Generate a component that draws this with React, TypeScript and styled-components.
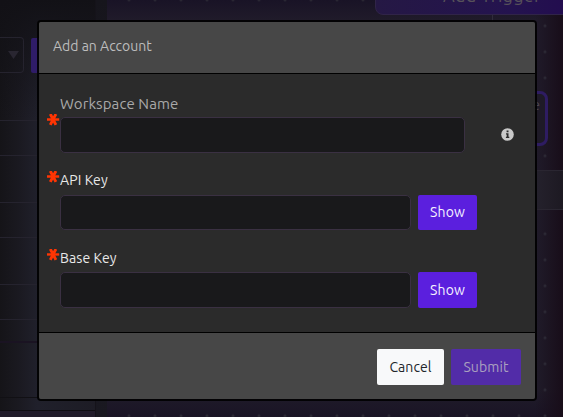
import React from 'react';
import styled, { createGlobalStyle } from 'styled-components';

const GlobalStyle = createGlobalStyle`
  *, *::before, *::after { box-sizing: border-box; }
  body {
    margin: 0;
    overflow: hidden;
    background: #18161e;
    font-family: Ubuntu, 'Noto Sans', sans-serif;
  }
`;

const Page = styled.div`
  position: relative;
  width: 563px;
  height: 417px;
  overflow: hidden;
`;

const Workspace = styled.div`
  display: flex;
  height: 100%;
`;

const SidePanel = styled.aside`
  width: 96px;
  height: 100%;
  overflow: hidden;
  border-right: 1px solid #15131a;
  background: linear-gradient(90deg, #151418 0, #1a1920 18px, #20202b 37px, #1d1c25 96px);
`;

const PanelRow = styled.div<{ $h: number; $line?: string; $thick?: number; $bg?: string }>`
  display: flex;
  align-items: flex-end;
  gap: 8px;
  height: ${(p) => p.$h}px;
  border-bottom: ${(p) => p.$thick ?? 1}px solid ${(p) => p.$line ?? '#25232e'};
  background: ${(p) => p.$bg ?? 'transparent'};
`;

const PickerRow = styled(PanelRow)`
  padding-bottom: 47px;
  background: linear-gradient(#121116, rgba(18, 17, 22, 0));
`;

const Picker = styled.div`
  display: flex;
  align-items: center;
  justify-content: flex-end;
  width: 24px;
  height: 36px;
  padding-right: 4px;
  border: 1px solid #25232e;
  border-left: 0;
  border-radius: 0 4px 4px 0;
`;

const PickerAction = styled.div`
  width: 50px;
  height: 35px;
  margin-left: -1px;
  border-radius: 2px;
  background: #2f1c68;
`;

const Gutter = styled.div`
  width: 11px;
  background: linear-gradient(#16151c, #1d1c26 50%, #191820);
`;

const Canvas = styled.div`
  position: relative;
  flex: 1;
  background: linear-gradient(90deg, rgba(24, 15, 26, 0) 428px, #180d19 456px),
    linear-gradient(#191326, #201b2a 20px, #201c2a 390px, #1a1425);
`;

const CanvasDrawing = styled.svg`
  position: absolute;
  inset: 0;
`;

const TriggerNode = styled.div`
  position: absolute;
  left: 268px;
  top: -40px;
  width: 230px;
  height: 55px;
  padding: 21px 0 0 67px;
  border: 1px solid #302448;
  border-radius: 8px;
  background: linear-gradient(90deg, #251844, #24134f 60%, #22084f);
  color: #57515a;
  font-size: 18px;
  line-height: 26px;
  white-space: nowrap;
  letter-spacing: 0.3px;
`;

const StepNode = styled.div`
  position: absolute;
  left: 340px;
  top: 91px;
  width: 101px;
  height: 55px;
  padding: 3px 5px;
  border: 3px solid #2e1c62;
  border-radius: 8px;
  background: #1e1a27;
  color: #4b4651;
  font-size: 14px;
  text-align: right;
`;

const CanvasBand = styled.div`
  position: absolute;
  left: 340px;
  right: 0;
  top: 170px;
  height: 40px;
  border: solid #2a2631;
  border-width: 1px 0;
  background: linear-gradient(90deg, #25222d 75%, #1d1922);
`;

const Dialog = styled.section`
  position: absolute;
  left: 37px;
  top: 20px;
  display: flex;
  flex-direction: column;
  width: 500px;
  height: 381px;
  border: 2px solid rgba(0, 0, 0, 0.9);
  border-radius: 4px;
  background: #2b2b2b;
  background-clip: padding-box;
  overflow: hidden;
`;

const DialogHeader = styled.header`
  display: flex;
  align-items: center;
  height: 52px;
  padding: 0 14px 4px;
  border-bottom: 1px solid #000;
  background: #474747;
  color: #bdbdbd;
`;

const Title = styled.h1`
  margin: 0;
  font-size: 14px;
  font-weight: 400;
`;

const DialogBody = styled.div`
  flex: 1;
  padding: 20px 20px 0 8px;
`;

const DialogFooter = styled.footer`
  display: flex;
  justify-content: flex-end;
  gap: 7px;
  height: 67px;
  padding: 16px 14px 14px;
  border-top: 1px solid #000;
  background: #474747;
`;

const Field = styled.div<{ $h: number; $starTop: number }>`
  display: grid;
  grid-template-columns: 13px 1fr;
  height: ${(p) => p.$h}px;

  > svg { margin-top: ${(p) => p.$starTop}px; }
`;

const Label = styled.label<{ $muted?: boolean; $size: number; $h: number }>`
  display: block;
  height: ${(p) => p.$h}px;
  color: ${(p) => (p.$muted ? '#a9a9a9' : '#e8e8e8')};
  font-size: ${(p) => p.$size}px;
  line-height: 20px;
  letter-spacing: 0.1px;
`;

const Controls = styled.div`
  display: flex;
  align-items: center;
`;

const Input = styled.input<{ $w: number; $h: number }>`
  width: ${(p) => p.$w}px;
  height: ${(p) => p.$h}px;
  padding: 0 10px;
  border: 1px solid #3a3042;
  border-radius: 5px;
  outline: 0;
  background: #19191b;
  color: #e8e8e8;
`;

const Button = styled.button<{ $kind: 'primary' | 'light' | 'disabled'; $w: number; $h: number }>`
  width: ${(p) => p.$w}px;
  height: ${(p) => p.$h}px;
  padding: 0 0 1px;
  border: 0;
  border-radius: 2px;
  font: 400 14px Ubuntu, 'Noto Sans', sans-serif;
  letter-spacing: 0.1px;
  color: ${(p) => ({ primary: '#f5f2ff', light: '#212529', disabled: '#aaa0bf' })[p.$kind]};
  background: ${(p) => ({ primary: '#5b1fde', light: '#f8f9fa', disabled: '#522ca8' })[p.$kind]};
`;

const ShowButton = styled(Button)`
  margin-left: 7px;
`;

const InfoIcon = styled.svg`
  margin: -2px 0 0 36px;
`;

const Star = () => (
  <svg width="13" height="12" viewBox="0 0 13 12" stroke="#ff3503" strokeWidth="2.9">
    <path d="M0 5.4H12.2" strokeWidth="2.5" />
    <path d="M3.3 0L8.9 10.8M8.9 0L3.3 10.8" />
  </svg>
);

const Info = () => (
  <InfoIcon width="13" height="13" viewBox="0 0 13 13">
    <circle cx="6.5" cy="6.5" r="6.3" fill="#c9c9c9" />
    <path d="M5.6 2.5h1.9v1.8H5.6zM5 5.3h2.5v3.5h.8v1.1H4.9V8.8h.8V6.4H5z" fill="#2b2b2b" />
  </InfoIcon>
);

const SecretField = ({ label, height, labelHeight, starTop, inputHeight }: {
  label: string; height: number; labelHeight: number; starTop: number; inputHeight: number;
}) => (
  <Field $h={height} $starTop={starTop}>
    <Star />
    <div>
      <Label $size={14} $h={labelHeight}>{label}</Label>
      <Controls>
        <Input $w={351} $h={inputHeight} aria-label={label} />
        <ShowButton $kind="primary" $w={59} $h={inputHeight}>Show</ShowButton>
      </Controls>
    </div>
  </Field>
);

export default function App() {
  return (
    <>
      <GlobalStyle />
      <Page>
        <Workspace>
          <SidePanel>
            <PickerRow $h={121}>
              <Picker>
                <svg width="11" height="8" viewBox="0 0 11 8"><path d="M0 0H11L5.5 8Z" fill="#292631" /></svg>
              </Picker>
              <PickerAction />
            </PickerRow>
            <PanelRow $h={35} />
            <PanelRow $h={47} />
            <PanelRow $h={35} />
            <PanelRow $h={47} />
            <PanelRow $h={35} />
            <PanelRow $h={23} $thick={2} $line="#1a1322" />
            <PanelRow $h={55} $line="#111014" />
            <PanelRow $h={13} $line="#100f13" />
            <PanelRow $h={10} $bg="#211c2a" $line="#211c2a" />
          </SidePanel>
          <Gutter />
          <Canvas>
            <CanvasDrawing width="456" height="417">
              <defs>
                <pattern id="dots" x="9" y="12.8" width="26" height="26" patternUnits="userSpaceOnUse">
                  <circle cx="13" cy="13" r="1.5" fill="#2b2834" />
                </pattern>
              </defs>
              <rect width="456" height="417" fill="url(#dots)" />
              <path d="M385.5 15V91" stroke="#302c3b" />
            </CanvasDrawing>
            <TriggerNode>Add Trigger</TriggerNode>
            <StepNode>Node</StepNode>
            <CanvasBand />
          </Canvas>
        </Workspace>

        <Dialog role="dialog" aria-label="Add an Account">
          <DialogHeader><Title>Add an Account</Title></DialogHeader>
          <DialogBody>
            <Field $h={76} $starTop={20}>
              <Star />
              <div>
                <Label $muted $size={15} $h={23}>Workspace Name</Label>
                <Controls>
                  <Input $w={405} $h={36} aria-label="Workspace Name" />
                  <Info />
                </Controls>
              </div>
            </Field>
            <SecretField label="API Key" height={78} labelHeight={25} starTop={1} inputHeight={35} />
            <SecretField label="Base Key" height={60} labelHeight={24} starTop={1} inputHeight={36} />
          </DialogBody>
          <DialogFooter>
            <Button $kind="light" $w={67} $h={36}>Cancel</Button>
            <Button $kind="disabled" $w={70} $h={36} disabled>Submit</Button>
          </DialogFooter>
        </Dialog>
      </Page>
    </>
  );
}
